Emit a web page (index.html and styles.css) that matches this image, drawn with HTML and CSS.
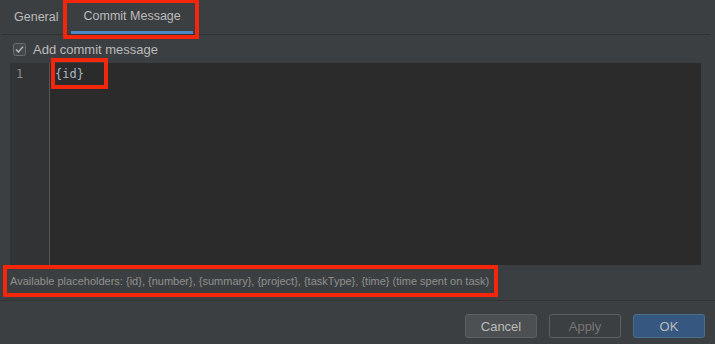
FILE: index.html
```html
<!DOCTYPE html>
<html>
    <head>
        <title>Commit Message</title>
        <link rel="stylesheet" href="styles.css">
    </head>
    <body>
        <div class="tabs">
            <div class="tab">General</div>
            <div class="tab active hl hl-tab">Commit Message</div>
        </div>
        <label class="check_row">
            <svg class="checkbox" width="13" height="13" viewBox="0 0 13 13">
                <rect x="0.5" y="0.5" width="12" height="12" rx="2" fill="#43494a" stroke="#6b6b6b"/>
                <path d="M3 6.6 L5.4 9 L10 3.6" fill="none" stroke="#bbbbbb" stroke-width="1.4"/>
            </svg>
            <span>Add commit message</span>
        </label>
        <div class="editor">
            <div class="gutter">1</div>
            <div class="code"><span class="hl hl-id">{id}</span></div>
        </div>
        <div class="hint">
            <span class="hl hl-hint">Available placeholders: {id}, {number}, {summary}, {project}, {taskType}, {time} (time spent on task)</span>
        </div>
        <div class="footer">
            <button class="btn">Cancel</button>
            <button class="btn disabled">Apply</button>
            <button class="btn primary">OK</button>
        </div>
    </body>
</html>
```

FILE: styles.css
```css
body{
    margin: 0;
    padding: 0;
    width: 715px;
    height: 344px;
    overflow: hidden;
    background: #3c3f41;
    color: #bbbbbb;
    font-family: "Liberation Sans", Arial, sans-serif;
    font-size: 13px;
}

.tabs {
    display: flex;
    height: 34px;
    margin: 0 5px 0 2px;
    border-bottom: 1px solid #323232;
    font-size: 12.5px;
}

.tab {
    padding: 0 12px;
    line-height: 34px;
    height: 34px;
    box-sizing: border-box;
}

.tab.active {
    padding: 0 12px;
    margin-left: 1px;
    border-bottom: 3px solid #4a88c7;
    line-height: 33px;
}

/* red annotation boxes */
.hl {
    position: relative;
}

.hl::after {
    content: '';
    position: absolute;
    border: 4px solid #f4270c;
}

.hl-tab::after {
    top: -1px;
    left: -8px;
    right: -6px;
    bottom: -8px;
}

.hl-id::after {
    top: -9px;
    left: -4px;
    right: -24px;
    bottom: -8px;
}

.hl-hint::after {
    top: 0;
    left: -7px;
    right: -9px;
    bottom: 0;
}

.check_row {
    display: flex;
    align-items: center;
    height: 28px;
    padding-left: 13px;
}

.checkbox {
    margin-right: 7px;
}

.editor {
    display: flex;
    height: 202px;
    margin: 0 14px 0 10px;
    background: #2b2b2b;
}

.gutter {
    width: 33px;
    padding-left: 6px;
    background: #313335;
    border-right: 1px solid #555555;
    color: #8a8a8a;
    font-family: "DejaVu Sans Mono", monospace;
    font-size: 12px;
    line-height: 17px;
    padding-top: 3px;
}

.code {
    padding: 3px 0 0 5px;
    font-family: "DejaVu Sans Mono", monospace;
    font-size: 12px;
    line-height: 17px;
    color: #a9b7c6;
}

.hint {
    height: 32px;
    padding-left: 10px;
    font-size: 11px;
    color: #8f8f8f;
}

.hint span {
    display: inline-block;
    height: 32px;
    line-height: 32px;
}

.footer {
    display: flex;
    justify-content: flex-end;
    gap: 12px;
    margin-top: 3px;
    padding: 13px 10px 0 0;
    border-top: 1px solid #323232;
}

.btn {
    width: 72px;
    height: 24px;
    border: 1px solid #5e6060;
    border-radius: 3px;
    background: #4c5052;
    color: #bbbbbb;
    font-family: "Liberation Sans", Arial, sans-serif;
    font-size: 13px;
}

.btn.disabled {
    background: #3c3f41;
    color: #777777;
}

.btn.primary {
    background: #365880;
    border-color: #4c708c;
}
```
